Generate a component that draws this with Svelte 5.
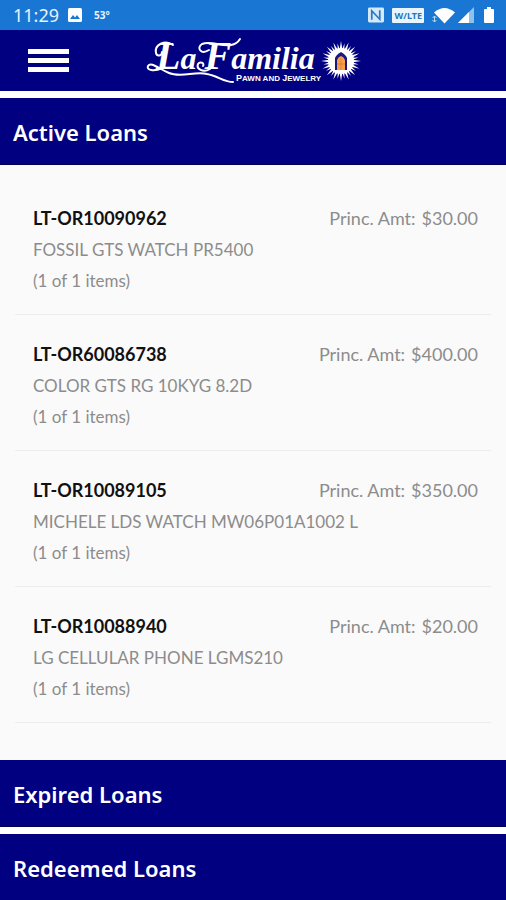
<script>
  const loans = [
    { id: 'LT-OR10090962', item: 'FOSSIL GTS WATCH PR5400', amount: '$30.00' },
    { id: 'LT-OR60086738', item: 'COLOR GTS RG 10KYG 8.2D', amount: '$400.00' },
    { id: 'LT-OR10089105', item: 'MICHELE LDS WATCH MW06P01A1002 L', amount: '$350.00' },
    { id: 'LT-OR10088940', item: 'LG CELLULAR PHONE LGMS210', amount: '$20.00' }
  ];
  let open = $state('active');
  const toggle = (name) => (open = open === name ? '' : name);
  const rays = Array.from({ length: 32 }, (_, i) => i * 11.25);
</script>

<div class="screen">
  <div class="status">
    <span class="time">11:29</span>
    <svg width="14" height="14" viewBox="0 0 14 14" aria-hidden="true">
      <rect width="14" height="14" rx="1.5" fill="#fff" />
      <path d="M2 11l3-4 2 2.500 2-2.500 3 4z" fill="#1976d2" />
    </svg>
    <span class="temp">53°</span>
    <span class="grow"></span>
    <svg width="16" height="16" viewBox="0 0 17 16" aria-hidden="true">
      <rect width="17" height="16" rx="1.500" fill="#d5e9f8" />
      <path d="M4 13V3.500L12.500 12.500V3" fill="none" stroke="#287ac8" stroke-width="1.800" />
    </svg>
    <span class="lte">W/LTE</span>
    <svg class="wifi" width="24" height="17" viewBox="0 0 24 17" aria-hidden="true">
      <path d="M2 5.500Q12.500-3.500 23 5.500L12.500 16.500z" fill="#fff" />
      <path d="M2.500 9v6M.5 11l2-2 2 2M.5 13l2 2 2-2" fill="none" stroke="#b8dcf5" stroke-width="1" />
    </svg>
    <svg class="cell" width="16" height="16" viewBox="0 0 16 16" aria-hidden="true">
      <path d="M0 16L16 0v16z" fill="#8fc1ec" />
      <path d="M0 16L11 5v11z" fill="#fff" />
    </svg>
    <svg width="10" height="16" viewBox="0 0 10 16" aria-hidden="true">
      <path d="M3 0h4v2h2q1 0 1 1v12q0 1-1 1H1q-1 0-1-1V3q0-1 1-1h2z" fill="#fff" />
    </svg>
  </div>

  <header>
    <button class="menu" aria-label="Menu"><i></i><i></i><i></i></button>
    <svg class="logo" width="216" height="50" viewBox="0 0 216 50" role="img" aria-label="La Familia Pawn and Jewelry">
      <g fill="none" stroke="#fff" stroke-width="2" stroke-linecap="round">
        <path d="M28 9C20 3 9 9 11 17C12 21 17 20 17 16" />
        <path d="M17 32C9 36 1 34 3 30C6 25 14 33 24 37C36 42 50 35 62 38C73 40 79 46 88 46" />
        <path d="M64 14C56 19 51 12 57 8C66 4 76 11 86 9Q92 8 95 3" />
        <path d="M65 33C58 37 51 33 53 28C55 25 60 27 58 30" />
      </g>
      <text class="script" x="11" y="33"><tspan class="cap">L</tspan>a <tspan class="cap">F</tspan>amilia</text>
      <text class="tag" x="91" y="45"><tspan class="first">P</tspan>AWN AND <tspan class="first">J</tspan>EWELRY</text>
      <g transform="translate(196 25)">
        {#each rays as angle, i}
          <path d="M-1.300-12L0-20L1.300-12z" fill="#fff" transform="rotate({angle}) scale({i % 2 ? 0.9 : 1})" />
        {/each}
        <circle r="13" fill="#fff" />
        <path d="M-6 9V-3Q-5-6 0-9Q5-6 6-3V9z" fill="#1b1780" />
        <path d="M-4 9V-1Q-3-4 0-5Q3-4 4-1V9z" fill="#f6a047" />
        <path d="M0-3V9M-4 3H4" stroke="#d9772c" stroke-width=".7" />
      </g>
    </svg>
  </header>

  <main>
    <section>
      <h2><button class="bar" aria-expanded={open === 'active'} onclick={() => toggle('active')}>Active Loans</button></h2>
      {#if open === 'active'}
        <ul>
          {#each loans as loan}
            <li>
              <div class="top">
                <strong>{loan.id}</strong>
                <span class="amount"><span>Princ. Amt:</span><span>{loan.amount}</span></span>
              </div>
              <div>{loan.item}</div>
              <div>(1 of 1 items)</div>
            </li>
          {/each}
        </ul>
      {/if}
    </section>
    <section>
      <h2><button class="bar" aria-expanded={open === 'expired'} onclick={() => toggle('expired')}>Expired Loans</button></h2>
    </section>
    <section class="spaced">
      <h2><button class="bar" aria-expanded={open === 'redeemed'} onclick={() => toggle('redeemed')}>Redeemed Loans</button></h2>
    </section>
  </main>
</div>

<style>
  :global(body) { margin: 0; background: #fafafa; }
  .screen { font-family: Lato, "Open Sans", sans-serif; color: #8c8c8c; }
  .status {
    display: flex; align-items: center; height: 30px; padding: 0 12px 0 13px;
    box-sizing: border-box; background: #1976d2; color: #e6f3fd;
  }
  .time { font: 18px/30px "Noto Sans", sans-serif; margin-right: 9px; }
  .temp { font: bold 10px/30px "Noto Sans", sans-serif; margin-left: 12px; }
  .grow { flex: 1; }
  .lte {
    margin-left: 8px; padding: 0 2px; border-radius: 1px; background: #e9f5fd;
    color: #2876bd; font: bold 9px/15px "Noto Sans", sans-serif;
  }
  .wifi { margin-left: 8px; }
  .cell { margin: 0 10px 0 2px; }
  header {
    display: flex; align-items: center; height: 61px; padding-left: 28px;
    background: #000080; border-bottom: 7px solid #fff;
  }
  .menu {
    display: flex; flex-direction: column; gap: 4px; width: 41px;
    padding: 0; border: 0; background: none;
  }
  .menu i { display: block; height: 5px; width: 100%; background: #fff; }
  .logo { margin-left: 76px; overflow: visible; }
  .script { font: italic bold 32px "Liberation Serif", serif; fill: #fff; }
  .cap { font-size: 40px; }
  .tag { font: bold 8px "Liberation Sans", sans-serif; fill: #fff; }
  .first { font-size: 9px; }
  h2 { margin: 0; }
  .bar {
    display: block; width: 100%; height: 67px; padding: 2px 13px 0; border: 0;
    border-bottom: 1px solid #000058; background: #000080; color: #fff;
    font: 600 22px/64px "Noto Sans", sans-serif; text-align: left;
  }
  .spaced { border-top: 7px solid #fff; }
  ul { list-style: none; margin: 0; padding: 14px 15px 37px; background: #fafafa; }
  li { padding: 24px 13px 18px 18px; border-bottom: 1px solid #ededed; font-size: 17px; line-height: 31px; }
  .top { display: flex; justify-content: space-between; font-size: 18px; }
  strong { color: #111; font-weight: bold; }
  .amount { display: flex; gap: 6px; }
</style>
